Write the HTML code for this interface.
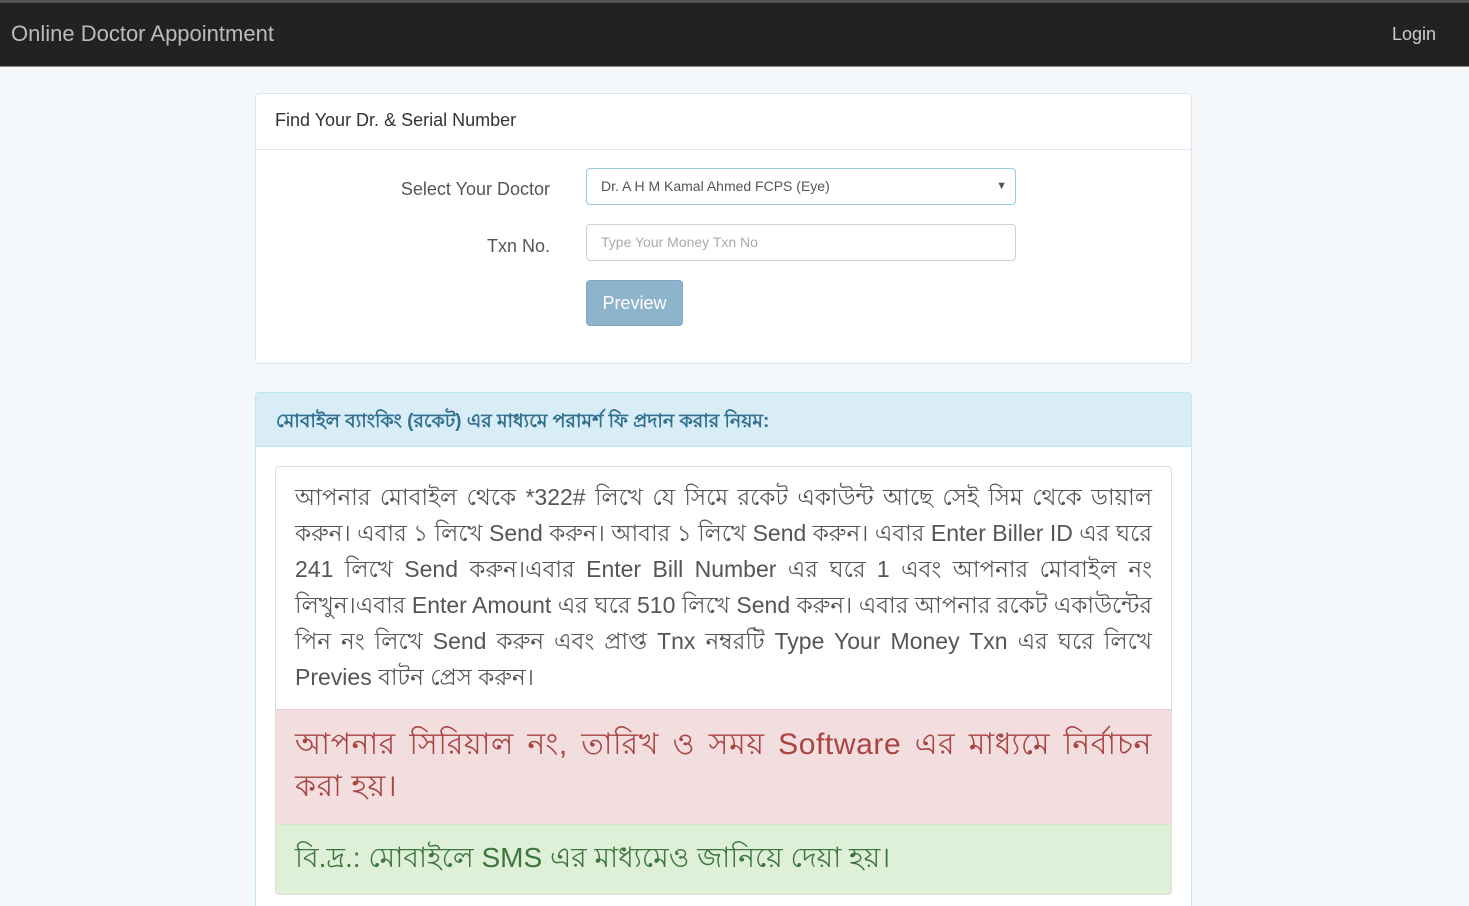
<!DOCTYPE html>
<html style="overflow:hidden;height:906px"><head><meta charset="utf-8"><style>
*{box-sizing:border-box}
body{margin:0;width:1469px;height:906px;overflow:hidden;background:#f5f8fa;font-family:"Liberation Sans",sans-serif;color:#636b6f;position:relative}
.nav{position:absolute;left:0;top:0;width:1469px;height:67px;background:#222;border-top:3px solid #555;border-bottom:1px solid #888}
.brand{position:absolute;left:11px;top:18px;font-size:22px;color:#bbb}
.login{position:absolute;right:33px;top:21px;font-size:18px;color:#ccc}
.p1{position:absolute;left:255px;top:93px;width:937px;height:271px;background:#fff;border:1px solid #dfe5ea;border-radius:4px}
.p1 .h{height:56px;border-bottom:1px solid #e3e8ec;padding:16px 19px;font-size:18px;color:#333}
.lbl{position:absolute;font-size:18px;color:#555;text-align:right;width:294px;left:0}
.inp{position:absolute;left:330px;width:430px;height:37px;border:1px solid #ccd0d2;border-radius:4px;font-size:14px;padding:9px 14px}
.btn{position:absolute;left:330px;top:186px;width:97px;height:46px;background:#8eb4cb;border:1px solid #7fa7c0;border-radius:4px;color:#fff;font-size:18px;text-align:center;line-height:44px}
.p2{position:absolute;left:255px;top:392px;width:937px;height:514px;background:#fff;border:1px solid #bce8f1;border-bottom:none;border-radius:4px 4px 0 0}
.p2 .h{height:54px;background:#d9edf7;border-bottom:1px solid #bce8f1;padding:14px 20px;font-size:19px;color:#31708f;font-weight:bold}
.well{position:absolute;left:19px;top:73px;width:897px;border:1px solid #ddd;border-radius:4px;overflow:hidden}
.t{padding:12px 19px;font-size:23px;line-height:36px;text-align:justify;color:#555;height:242px}
.red{background:#f2dede;color:#a94442;padding:14px 19px;font-size:30px;letter-spacing:0.6px;line-height:42px;text-align:justify;height:115px;border-top:1px solid #ebccd1}
.grn{background:#dff0d8;color:#3c763d;padding:12px 19px;font-size:28px;line-height:42px;height:70px;border-top:1px solid #d6e9c6}
</style></head><body>
<div class="nav"><div class="brand">Online Doctor Appointment</div><div class="login">Login</div></div>
<div class="p1"><div class="h">Find Your Dr. &amp; Serial Number</div>
<div class="lbl" style="top:85px">Select Your Doctor</div>
<div class="inp" style="top:74px;border-color:#98cbe8;color:#555">Dr. A H M Kamal Ahmed FCPS (Eye)<span style="position:absolute;right:8px;font-size:11px;top:11px">▼</span></div>
<div class="lbl" style="top:142px">Txn No.</div>
<div class="inp" style="top:130px;color:#aaa">Type Your Money Txn No</div>
<div class="btn">Preview</div></div>
<div class="p2"><div class="h">মোবাইল ব্যাংকিং (রকেট) এর মাধ্যমে পরামর্শ ফি প্রদান করার নিয়ম:</div>
<div class="well">
<div class="t">আপনার মোবাইল থেকে *322# লিখে যে সিমে রকেট একাউন্ট আছে সেই সিম থেকে ডায়াল করুন। এবার ১ লিখে Send করুন। আবার ১ লিখে Send করুন। এবার Enter Biller ID এর ঘরে 241 লিখে Send করুন।এবার Enter Bill Number এর ঘরে 1 এবং আপনার মোবাইল নং লিখুন।এবার Enter Amount এর ঘরে 510 লিখে Send করুন। এবার আপনার রকেট একাউন্টের পিন নং লিখে Send করুন এবং প্রাপ্ত Tnx নম্বরটি Type Your Money Txn এর ঘরে লিখে Previes বাটন প্রেস করুন।</div>
<div class="red">আপনার সিরিয়াল নং, তারিখ ও সময় Software এর মাধ্যমে নির্বাচন করা হয়।</div>
<div class="grn">বি.দ্র.: মোবাইলে SMS এর মাধ্যমেও জানিয়ে দেয়া হয়।</div>
</div></div>
</body></html>
